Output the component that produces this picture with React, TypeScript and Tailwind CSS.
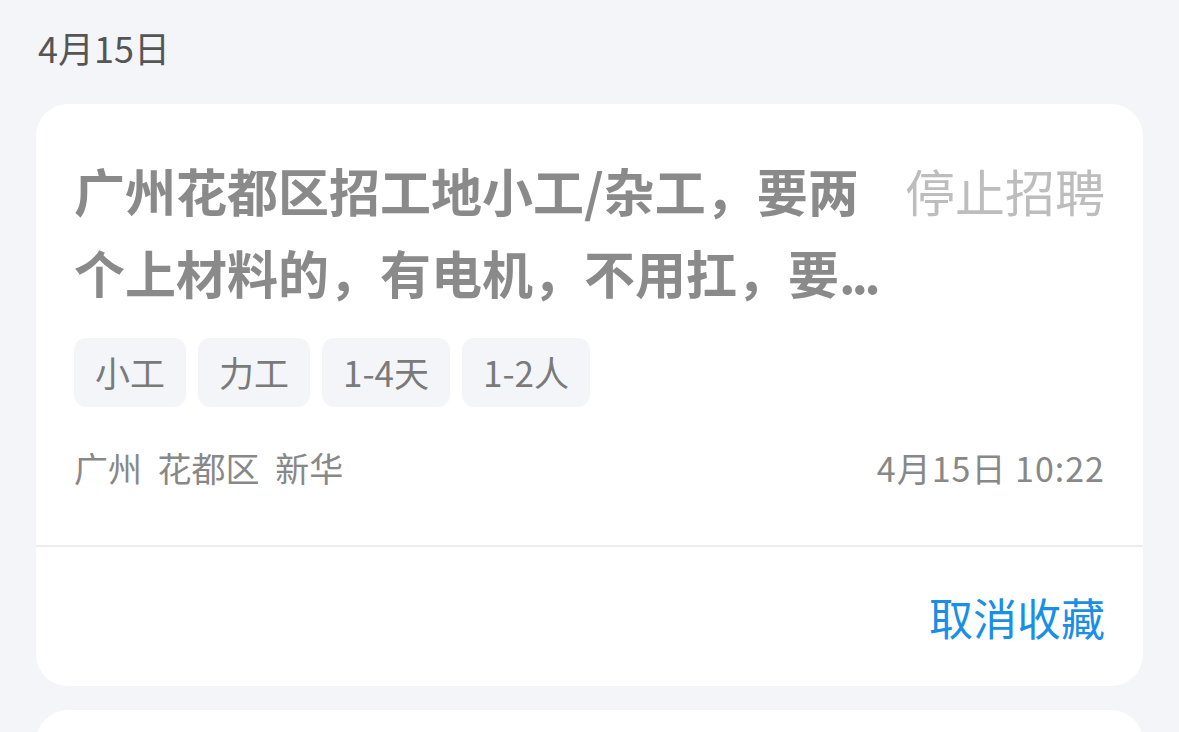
import React from 'react';

const font = { fontFamily: '"Noto Sans CJK SC", "Noto Sans", sans-serif' };

const tags = ['小工', '力工', '1-4天', '1-2人'];

const JobCard: React.FC = () => {
  return (
    <div className="bg-white rounded-[32px] overflow-hidden">
      <div className="px-[38px] pt-[45px] pb-[53px]">
        <div className="flex items-start gap-[28px]">
          <h2 className="flex-1 text-[51px] leading-[82px] font-bold text-[#8a8a8a]">
            <span className="block whitespace-nowrap">广州花都区招工地小工/杂工，要两</span>
            <span className="block whitespace-nowrap">
              个上材料的，有电机，不用扛，要<span className="tracking-[-4px]">...</span>
            </span>
          </h2>
          <span className="shrink-0 text-[50px] leading-[82px] text-[#bdbdbd]">停止招聘</span>
        </div>
        <div className="flex gap-[12px] mt-[25px]">
          {tags.map((t) => (
            <span
              key={t}
              className="h-[69px] px-[21px] flex items-center rounded-[12px] bg-[#f4f5f9] text-[35px] text-[#7a7a7a]"
            >
              {t}
            </span>
          ))}
        </div>
        <div className="flex justify-between items-center mt-[37px] text-[34px] leading-[48px] text-[#888888]">
          <span className="[word-spacing:8px]">广州 花都区 新华</span>
          <span className="tracking-[1px]">4月15日 10:22</span>
        </div>
      </div>
      <div className="h-[2px] bg-[#ececec]" />
      <div className="h-[139px] px-[38px] flex items-center justify-end">
        <button className="text-[44px] text-[#1a8fe6]">取消收藏</button>
      </div>
    </div>
  );
};

export default function App() {
  return (
    <div className="h-[732px] overflow-hidden bg-[#f4f5f9] px-[36px]" style={font}>
      <div className="h-[104px] pt-[22px] pl-[2px] text-[36px] leading-[50px] text-[#555555]">4月15日</div>
      <div className="flex flex-col gap-[24px]">
        <JobCard />
        <JobCard />
      </div>
    </div>
  );
}
